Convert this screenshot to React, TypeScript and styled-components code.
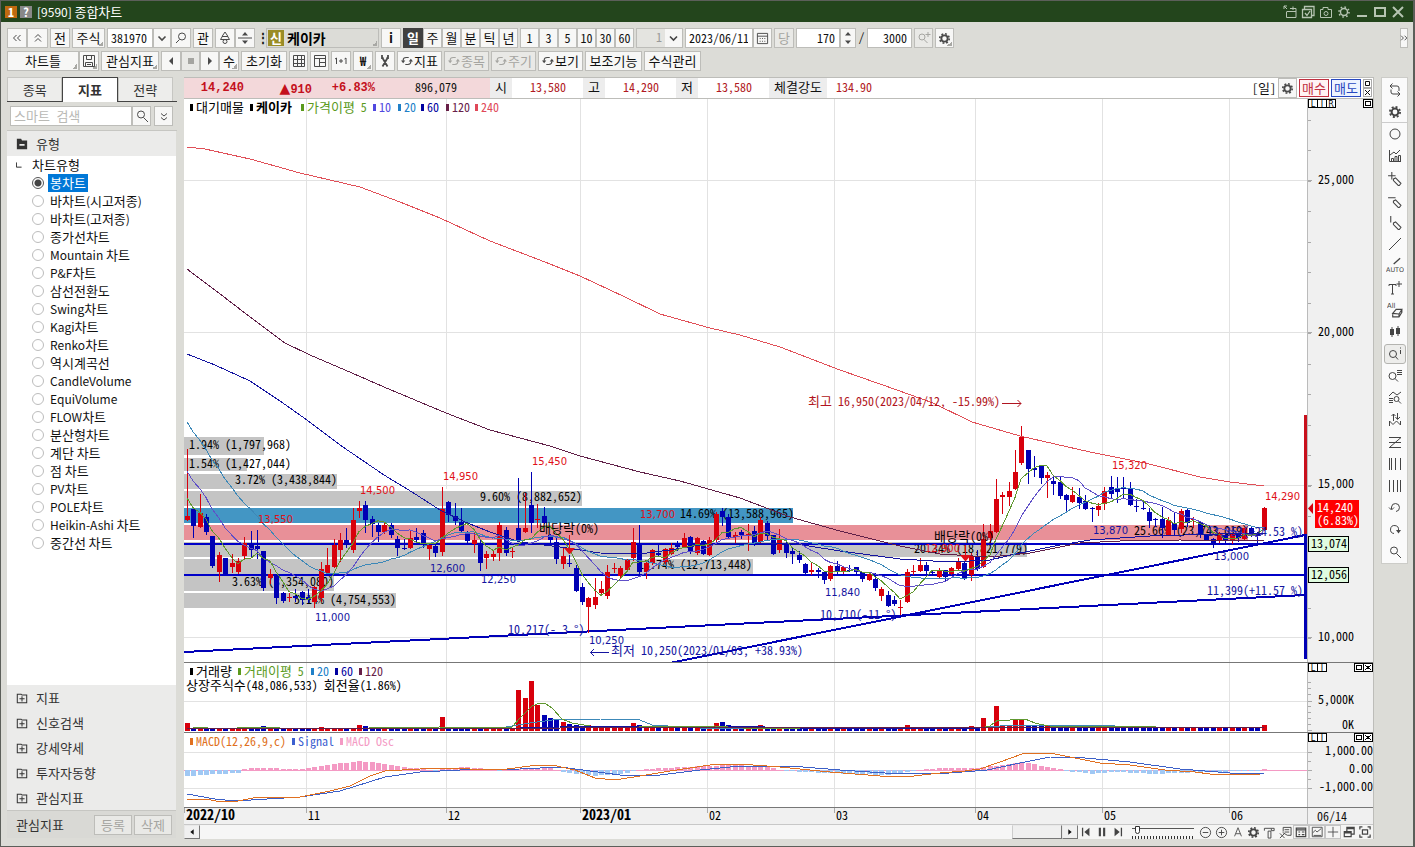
import React from 'react';
import styled, { createGlobalStyle, css } from 'styled-components';

const MONO = '"Noto Sans Mono CJK KR", "Noto Sans CJK KR", "Liberation Mono", monospace';
const SANS = '"Noto Sans CJK KR", "Noto Sans", sans-serif';

const Global = createGlobalStyle`
  * { box-sizing: border-box; }
  body { margin: 0; background: #dcdcd7; }
  button, input, select { font: inherit; color: inherit; margin: 0; }
`;

/* ---------- window frame ---------- */

const Window = styled.div`
  min-height: 100vh;
  display: flex;
  flex-direction: column;
  background: #dcdcd7;
  border: solid #5c5f5a;
  border-width: 1px 2px 1px 1px;
  font: 12px/16px ${MONO};
  color: #111;
`;
const TitleBar = styled.header`
  height: 21px;
  background: #23451c;
  color: #fff;
  display: flex;
  align-items: center;
  gap: 3px;
  padding: 0 8px 0 4px;
`;
const Badge = styled.span<{ $bg: string }>`
  width: 12px;
  height: 12px;
  background: ${p => p.$bg};
  font-weight: 700;
  line-height: 12px;
  text-align: center;
`;
const Title = styled.h1`
  font: 400 12px/16px ${SANS};
  margin: 0 auto 0 2px;
`;
const TitleButton = styled.button`
  width: 15px;
  height: 16px;
  padding: 0;
  border: 0;
  background: none;
  color: #b6c4b2;
  display: grid;
  place-items: center;
`;

/* ---------- toolbars ---------- */

const Toolbars = styled.div`
  padding: 6px 5px 6px 6px;
  display: flex;
  flex-direction: column;
  gap: 3px;
`;
const ToolRow = styled.div`
  display: flex;
  gap: 2px;
  height: 20px;
`;
const Joined = styled.div`
  display: flex;
  & > * + * { border-left-width: 0; }
`;
const control = css<{ $w: number }>`
  width: ${p => p.$w}px;
  height: 20px;
  flex: none;
  border: 1px solid #bdbdb9;
  border-radius: 0;
  background: #f7f7f6;
`;
const ToolButton = styled.button<{ $w: number; $on?: boolean; $corner?: boolean }>`
  ${control}
  padding: 0;
  display: flex;
  align-items: center;
  justify-content: center;
  gap: 1px;
  font-size: 13px;
  line-height: 16px;
  white-space: nowrap;
  & > svg { color: #4a4a4a; flex: none; }
  ${p => p.$on && 'background: #404040; border-color: #404040; color: #fff; font-weight: 700;'}
  ${p => p.$corner && 'background: linear-gradient(135deg, transparent 50%, #a8a8a4 50%) right 1px bottom 1px / 5px 5px no-repeat #f7f7f6;'}
  &:disabled { color: #a5a5a1; background: #e9e9e6; }
  &:disabled > svg { color: #a5a5a1; }
`;
const NumberButton = styled(ToolButton)`
  font-size: 12px;
`;
const Field = styled.input<{ $w: number; $right?: boolean }>`
  ${control}
  background: #fff;
  padding: 0 4px 2px 3px;
  text-align: ${p => (p.$right ? 'right' : 'left')};
`;
const UnitSelect = styled.select<{ $w: number }>`
  ${control}
  appearance: none;
  padding: 0 20px 2px 0;
  text-align: right;
  text-align-last: right;
  color: #999;
  background: #e4e4e0;
`;
const SelectWrap = styled.label`
  position: relative;
  display: flex;
  & > svg { position: absolute; right: 1px; top: 1px; background: #f7f7f6; pointer-events: none; }
`;
const Dots = styled.span`
  width: 7px;
  text-align: center;
  line-height: 18px;
`;
const NameBox = styled.button`
  ${control}
  background: linear-gradient(135deg, transparent 50%, #a8a8a4 50%) right 1px bottom 1px / 5px 5px no-repeat #dcdcd7;
  display: flex;
  align-items: center;
  gap: 3px;
  padding: 0 1px;
  font-weight: 700;
  font-size: 14px;
  line-height: 16px;
  color: #000;
`;
const MarketTag = styled.span`
  width: 16px;
  height: 16px;
  line-height: 16px;
  background: #9a8c26;
  color: #fff;
  font-size: 13px;
`;
const Push = styled.div`
  margin-left: auto;
`;

/* ---------- body ---------- */

const Body = styled.div`
  flex: 1;
  display: grid;
  grid-template-columns: 170px minmax(0, 1fr) 27px;
  gap: 7px;
  padding: 0 5px 7px 6px;
`;
const Side = styled.aside`
  display: flex;
  flex-direction: column;
`;
const Tabs = styled.div`
  display: flex;
  border-bottom: 1px solid #444;
  padding-right: 4px;
`;
const Tab = styled.button<{ $on?: boolean }>`
  flex: 1;
  height: 24px;
  padding: 0;
  border: 1px solid #c6c6c2;
  border-bottom: 0;
  background: #ededeb;
  color: #333;
  font-size: 13px;
  line-height: 16px;
  ${p => p.$on && 'border-color: #444; background: #fff; font-weight: 700; margin-bottom: -1px; height: 25px;'}
`;
const Search = styled.div`
  display: flex;
  padding: 4px 3px;
  border-bottom: 1px solid #c6c6c2;
  input { font-size: 13px; }
  input::placeholder { color: #b9b9b5; }
`;
const SearchMore = styled.div`
  margin-left: 3px;
`;
const GroupHead = styled.button`
  width: 169px;
  height: 25px;
  flex: none;
  border: 0;
  padding: 0 0 0 9px;
  display: flex;
  align-items: center;
  gap: 8px;
  background: #ebebea;
  color: #333;
  font-size: 13px;
  line-height: 16px;
  text-align: left;
`;
const Tree = styled.fieldset`
  flex: 1;
  width: 169px;
  margin: 0;
  border: 0;
  padding: 0 0 0 9px;
  background: #fff;
  font: 12px/18px ${SANS};
  color: #111;
`;
const TreeTitle = styled.legend`
  float: left;
  width: 100%;
  height: 18px;
  padding: 0;
  display: flex;
  gap: 10px;
  align-items: center;
`;
const TreeItem = styled.label`
  clear: both;
  height: 18px;
  padding-left: 16px;
  display: flex;
  align-items: center;
  gap: 4px;
`;
const Radio = styled.input`
  appearance: none;
  width: 12px;
  height: 12px;
  border: 1px solid #bcbcbc;
  border-radius: 50%;
  background: #fff;
  &:checked { border-color: #555; background: radial-gradient(#444 0 3px, #fff 4px); }
`;
const TreeLabel = styled.span<{ $on?: boolean }>`
  height: 18px;
  padding: 0 2px;
  ${p => p.$on && 'background: #0078d7; color: #fff;'}
`;
const Hangul = styled.span`
  font-size: 13px;
  line-height: 16px;
`;
const SideFoot = styled.div`
  width: 169px;
  height: 28px;
  margin-bottom: 1px;
  display: flex;
  align-items: center;
  gap: 2px;
  padding: 0 4px 0 9px;
  border-top: 1px solid #c6c6c2;
  background: #d9d9d5;
  color: #333;
  font-size: 13px;
  & > span { margin-right: auto; }
`;

/* ---------- quote strip ---------- */

const Main = styled.main`
  border: solid #bdbdb9;
  border-width: 1px 1px 0 0;
  background: #fff;
  align-self: start;
`;
const Quote = styled.div`
  display: flex;
  height: 21px;
  line-height: 18px;
  border-bottom: 1px solid #bdbdb9;
`;
const PriceBox = styled.div`
  display: grid;
  grid-template-columns: 60px 68px 63px 82px;
  width: 306px;
  background: #f3d8da;
  text-align: right;
`;
const Strong = styled.b`
  font: 700 12px/20px "Liberation Mono", monospace;
  color: #c4101c;
`;
const Rise = styled.span`
  font: 700 14px/20px "DejaVu Sans", sans-serif;
`;
const QuoteName = styled.span<{ $w: number }>`
  width: ${p => p.$w}px;
  background: #ededed;
  text-align: center;
  font-size: 13px;
`;
const QuoteValue = styled.span<{ $w: number }>`
  width: ${p => p.$w}px;
  padding-right: 17px;
  text-align: right;
  color: #b01822;
`;
const QuoteTools = styled.div`
  margin-left: auto;
  display: flex;
  align-items: center;
  gap: 2px;
  padding-right: 1px;
`;
const OrderButton = styled.button<{ $c: string; $bg: string }>`
  width: 30px;
  height: 18px;
  padding: 0;
  font-size: 13px;
  line-height: 14px;
  border: 1px solid ${p => p.$c};
  background: ${p => p.$bg};
  color: ${p => p.$c};
`;
const MiniStack = styled.div`
  display: grid;
  grid-template-rows: 9px 9px;
`;
const MiniButton = styled.button`
  width: 9px;
  height: 9px;
  padding: 0;
  border: 1px solid #aaa;
  background: #fff;
  display: grid;
  place-items: center;
`;

/* ---------- chart panes ---------- */

const Pane = styled.section`
  display: grid;
  grid-template-columns: minmax(0, 1fr) 66px;
  border-bottom: 1px solid #777;
`;
const Drawing = styled.svg<{ $open?: boolean }>`
  display: block;
  width: 100%;
  height: auto;
  ${p => p.$open && 'overflow: visible;'}
`;
const AxisCol = styled.div`
  background: #f0f0f0;
  border-left: 1px solid #bbb;
`;
const DateRow = styled(Pane)`
  background: #f0f0f0;
  border-bottom-color: #c8c8c8;
`;
const LastDate = styled.time`
  border-left: 1px solid #bbb;
  padding-left: 9px;
  line-height: 16px;
`;
const ScrollRow = styled.div`
  display: flex;
  height: 14px;
  background: #f5f5f4;
`;
const ScrollTrack = styled.div`
  flex: 1;
  display: flex;
  justify-content: space-between;
  background: #f6f6f6;
`;
const ScrollButton = styled.button`
  width: 16px;
  height: 14px;
  padding: 0;
  border: 1px solid;
  border-color: #e8e8e8 #777 #777 #e8e8e8;
  background: #f0f0f0;
  display: grid;
  place-items: center;
`;
const ScrollThumb = styled.div`
  width: 50px;
  margin-left: auto;
  border: 1px solid;
  border-color: #e8e8e8 #777 #777 #ccc;
  background: #efefef;
`;
const PlayTools = styled.div`
  display: flex;
  width: 295px;
  align-items: center;
`;
const PlainButton = styled.button<{ $on?: boolean }>`
  width: 16px;
  height: 14px;
  padding: 0;
  border: ${p => (p.$on ? '1px solid #c4c4c4' : '0')};
  background: none;
  color: #444;
  display: grid;
  place-items: center;
`;
const SpeedLabel = styled.label`
  width: 62px;
  height: 14px;
  margin: 0 4px 0 6px;
  display: block;
  background: repeating-linear-gradient(90deg, #333 0 1px, transparent 1px 3px) 0 100% / 62px 3px no-repeat;
`;
const Speed = styled.input`
  appearance: none;
  display: block;
  width: 62px;
  height: 9px;
  background: linear-gradient(#555, #555) 0 3px / 62px 1px no-repeat;
  &::-webkit-slider-thumb {
    appearance: none;
    width: 5px;
    height: 8px;
    border: 1px solid #333;
    border-radius: 0 0 3px 3px;
    background: #fff;
  }
`;

/* ---------- right tool strip ---------- */

const Strip = styled.nav`
  align-self: start;
  padding: 1px 0 0;
  background: #fafafa;
  border: 1px solid #ccccc8;
  display: flex;
  flex-direction: column;
  align-items: center;
`;
const StripButton = styled.button<{ $on?: boolean; $line?: boolean }>`
  width: 100%;
  height: 22px;
  padding: 0;
  border: 0;
  border-bottom: ${p => (p.$line ? '1px solid #ccc' : '0')};
  background: none;
  color: #444;
  display: grid;
  place-items: center;
  ${p => p.$on && 'width: 22px; height: 20px; margin: 1px; border: 1px solid #b4b4b0; border-radius: 3px; background: #ededeb;'}
`;

/* ---------- icons ---------- */

type IconProps = { d?: string; fill?: string; s?: number; w?: number; children?: React.ReactNode };
const Icon = ({ d, fill, s = 14, w = 1, children }: IconProps) => (
  <svg width={s} height={s} viewBox="0 0 14 14" fill="none" stroke="currentColor" strokeWidth={w} aria-hidden="true">
    {d && <path d={d} />}
    {fill && <path d={fill} fill="currentColor" stroke="none" />}
    {children}
  </svg>
);
const Gear = ({ s = 14 }: { s?: number }) => (
  <Icon s={s}>
    <circle cx="7" cy="7" r="3.4" strokeWidth="2" />
    <circle cx="7" cy="7" r="5.1" strokeWidth="1.8" strokeDasharray="2 2" />
  </Icon>
);
const Sun = () => (
  <Icon>
    <circle cx="7" cy="7" r="3.5" strokeWidth="1.4" />
    <circle cx="7" cy="7" r="5" strokeWidth="1.6" strokeDasharray="1.6 2.3" />
  </Icon>
);
const MAG = 'M2.5 5.5a3.5 3.5 0 1 0 7 0a3.5 3.5 0 1 0 -7 0M8.5 8.5L13 13';
const Cycle = () => (
  <Icon s={12} w={1.2} d="M2.500 7V6Q2.500 3 6 3H9M11.500 7V8Q11.500 11 8 11H5" fill="M0 6.500H5L2.500 9.500ZM9 7.500H14L11.500 4.500Z" />
);
const Down = () => <Icon w={1.6} d="M3.5 5.5L7 9L10.5 5.5" />;
const Spin = ({ w }: { w: number }) => (
  <ToolButton $w={w} aria-label="증감"><Icon fill="M7 1L10 4.500H4ZM7 13L10 9.500H4Z" d={w > 16 ? 'M0 7H14' : undefined} /></ToolButton>
);

const runs = (t: string) => t.split(/([가-힣]+)/).filter(Boolean);
const isKorean = (t: string) => /[가-힣]/.test(t);
const Mixed = ({ t }: { t: string }) => (
  <>{runs(t).map((r, i) => (isKorean(r) ? <Hangul key={i}>{r}</Hangul> : r))}</>
);

/* ---------- chart data: [up, high, bodyTop, bodyBottom, low] in chart rows ---------- */

type Candle = [number, number, number, number, number];
const CANDLES: Candle[] = [
  [1,449,516,520,520],[0,507,509,526,537],[1,494,513,527,527],[0,514,517,532,534],[0,536,536,566,567],
  [1,552,555,572,581],[0,558,558,574,574],[1,554,563,567,572],[1,558,561,572,573],[1,537,543,556,559],
  [0,531,544,550,556],[0,530,546,549,558],[0,551,551,588,590],[1,569,574,578,583],[0,574,574,598,603],
  [0,592,593,601,602],[1,593,597,598,601],[0,589,596,598,601],[0,591,592,600,604],[0,589,597,600,602],
  [1,586,587,602,607],[1,562,569,598,601],[1,548,565,573,573],[1,539,545,567,567],[1,533,540,550,561],
  [0,528,540,545,547],[1,508,520,550,552],[1,501,508,511,517],[0,501,505,520,532],[0,516,519,524,536],
  [0,523,525,532,541],[1,523,525,532,533],[0,523,525,535,537],[0,536,539,548,555],[0,539,548,549,549],
  [1,530,538,548,548],[0,528,537,540,541],[0,530,533,544,547],[1,545,545,549,559],[0,543,546,553,556],
  [1,487,509,552,555],[0,501,502,515,521],[0,503,516,521,524],[0,508,522,531,531],[0,531,532,541,543],
  [1,532,540,544,552],[0,539,543,563,570],[1,551,554,558,568],[1,551,554,557,560],[1,522,525,553,560],
  [0,527,530,553,555],[1,547,551,552,557],[0,478,528,541,541],[1,493,528,532,532],[0,472,505,523,532],
  [1,504,519,520,527],[0,507,516,523,523],[0,534,535,540,543],[0,537,542,559,563],[1,547,556,564,568],
  [0,555,563,564,566],[0,565,568,591,591],[0,583,587,602,604],[1,597,598,607,632],[1,578,597,605,608],
  [1,581,589,593,595],[1,565,572,596,598],[1,563,568,569,572],[1,566,568,576,578],[1,559,560,570,571],
  [1,528,542,558,560],[0,525,545,572,576],[1,560,563,572,578],[1,549,550,563,564],[0,545,553,555,556],
  [1,548,549,562,563],[1,543,548,554,554],[0,541,545,547,550],[1,533,538,547,547],[0,536,537,551,553],
  [1,537,538,553,554],[0,540,541,554,554],[1,537,540,555,555],[1,512,514,540,542],[0,508,511,517,525],
  [0,514,517,537,538],[1,532,535,537,543],[0,530,532,535,538],[1,524,534,535,550],[0,526,531,543,545],
  [1,517,520,542,542],[0,521,523,536,540],[0,535,535,554,554],[1,529,540,550,552],[0,542,543,553,557],
  [0,547,551,554,563],[0,551,555,560,562],[0,563,564,573,573],[1,562,570,572,574],[0,568,570,572,577],
  [0,572,572,580,583],[1,565,566,579,580],[0,561,566,571,574],[1,566,567,572,573],[0,565,570,571,571],
  [0,567,567,572,573],[0,572,572,579,581],[1,573,574,580,580],[0,573,579,588,590],[1,587,589,596,600],
  [0,591,595,606,606],[0,596,600,604,605],[1,600,607,608,614],[1,569,572,602,602],[1,565,571,572,574],
  [1,558,565,571,571],[0,562,565,571,573],[0,570,572,573,575],[1,568,570,577,577],[0,570,570,577,580],
  [1,567,568,574,574],[1,558,562,569,569],[0,562,563,579,579],[1,553,556,575,580],[0,550,557,569,570],
  [1,524,539,567,567],[1,524,531,538,542],[1,479,499,532,532],[1,492,495,497,513],[1,482,491,497,505],
  [1,450,472,489,489],[1,426,437,463,464],[0,450,450,469,483],[0,456,468,470,476],[0,465,466,478,483],
  [1,472,475,478,497],[0,476,481,484,494],[0,477,482,496,498],[0,494,495,500,511],[1,487,495,502,502],
  [0,488,497,503,508],[0,495,501,509,509],[0,507,508,509,521],[1,503,506,510,515],[1,487,491,504,509],
  [0,476,487,494,497],[0,477,488,492,502],[0,477,488,489,497],[0,482,488,505,505],[0,499,506,507,511],
  [0,500,508,509,509],[0,508,512,521,527],[0,518,519,520,526],[0,507,519,528,537],[1,517,520,535,535],
  [0,513,523,530,535],[1,509,511,529,532],[0,508,510,523,526],[1,517,519,520,527],[0,521,522,535,537],
  [0,534,535,540,540],[0,538,539,545,547],[1,532,533,541,542],[0,534,535,541,543],[1,533,534,541,543],
  [0,532,533,538,541],[1,528,528,539,539],[0,527,528,535,536],[0,532,533,535,543],[1,507,508,530,530],
];
/* closes before the visible range, newest last, feed the moving averages */
const HISTORY = [331,340,350,359,368,378,387,396,406,415,426,435,444,453,462,478,488,500,508];
const RED = '#d8000c';
const BLUE = '#0000b4';
const cx = (i: number) => Math.round(187 + i * 6.37);
const closes = [...HISTORY, ...CANDLES.map(c => (c[0] ? c[2] : c[3]))];
const average = (n: number) =>
  CANDLES.map((_, i) => {
    const end = i + HISTORY.length + 1;
    const part = closes.slice(end - n, end);
    return `${cx(i)},${(part.reduce((a, b) => a + b, 0) / n).toFixed(1)}`;
  }).join(' ');

const MA60 = '187,354 215,365 250,381 280,401 307,420 340,445 384,475 412,492 440,510 465,522 490,532 520,542 560,547 600,553 640,554 670,550 700,545 740,543 790,543 840,551 900,559 950,562 990,560 1020,553 1060,545 1090,540 1150,536 1220,534 1264,533';
const MA120 = '187,269 215,290 250,317 285,343 310,355 352,373 384,387 446,413 490,430 550,446 580,456 640,472 680,481 740,498 790,517 840,531 900,546 940,554 990,557 1030,553 1080,543 1120,541 1180,540 1264,541';
const MA240 = '187,147 205,149 250,159 300,173 330,180 360,187 400,202 440,218 490,241 545,262 580,276 625,297 660,314 710,328 740,335 780,347 840,370 897,390 933,403 972,422 1020,436 1090,452 1145,463 1200,477 1230,482 1264,486';

const MONTHS: [number, string, boolean?][] = [
  [184, '2022/10', true], [306, '11'], [446, '12'], [580, '2023/01', true], [707, '02'],
  [834, '03'], [975, '04'], [1102, '05'], [1229, '06'],
];
const PROFILE: [number, number, number, string][] = [
  [437, 18, 80, '#c4c4c4'], [458, 13, 63, '#c4c4c4'], [474, 15, 153, '#c4c4c4'], [491, 15, 398, '#c4c4c4'],
  [508, 15, 609, '#4396c4'], [525, 15, 1064, '#e89098'], [542, 15, 843, '#c4c4c4'], [559, 15, 569, '#c4c4c4'],
  [576, 15, 150, '#c4c4c4'], [593, 15, 212, '#c4c4c4'],
];
const PROFILE_TEXT: [number, number, string][] = [
  [189, 445, '1.94% (1,797,968)'], [189, 464, '1.54% (1,427,044)'], [235, 480, '3.72% (3,438,844)'],
  [480, 497, '9.60% (8,882,652)'], [680, 514, '14.69% (13,588,965)'], [1134, 531, '25.66% (23,743,019)'],
  [914, 549, '20.34% (18,821,779)'], [638, 565, '13.74% (12,713,448)'], [232, 582, '3.63% (3,354,080)'],
  [294, 600, '5.14% (4,754,553)'],
];
const PEAKS: [number, number, string][] = [
  [258, 519, '13,550'], [360, 490, '14,500'], [443, 476, '14,950'], [532, 461, '15,450'], [640, 514, '13,700'],
  [925, 548, '12,900'], [1112, 465, '15,320'], [1265, 496, '14,290'],
];
const TROUGHS: [number, number, string][] = [
  [315, 617, '11,000'], [430, 568, '12,600'], [481, 579, '12,250'], [589, 640, '10,250'], [825, 592, '11,840'],
  [1093, 530, '13,870'], [1214, 556, '13,000'],
];

const VOLUME: Record<number, number> = {
  0: 8, 2: 4, 12: 5, 21: 4, 27: 6, 28: 5, 40: 14, 52: 41, 53: 33, 54: 50, 55: 26, 56: 16, 57: 13, 58: 11, 59: 9,
  60: 7, 61: 6, 62: 5, 63: 6, 70: 8, 71: 6, 83: 8, 84: 9, 85: 6, 90: 6, 108: 4, 113: 6, 123: 5, 125: 13, 126: 5,
  127: 25, 128: 6, 129: 6, 130: 11, 131: 12, 132: 5, 133: 5, 134: 5, 135: 6, 169: 6,
};
const VOL_MA5 = '187,729 200,727 215,729 260,727 300,729 440,727 470,728 512,727 520,718 532,706 540,703 546,704 552,708 562,719 572,723 590,726 640,727 715,726 740,728 975,729 990,726 998,720 1010,720 1025,719 1035,723 1048,726 1264,728';
const VOL_MA20 = '187,729 300,728 500,728 530,723 560,719 600,719 640,720 652,725 700,728 980,728 1010,725 1105,725 1125,727 1264,728';

const interpolate = (pts: [number, number][], i: number) => {
  const k = pts.findIndex(p => p[0] >= i);
  if (k <= 0) return pts[0][1];
  const [a, b] = [pts[k - 1], pts[k]];
  return a[1] + ((b[1] - a[1]) * (i - a[0])) / (b[0] - a[0]);
};
const OSC: [number, number][] = [
  [0, -6], [5, -4], [8, -3], [9, 1], [11, 2], [18, 1], [21, 4], [27, 9], [31, 6], [34, 3], [37, 1], [39, -1], [41, 2],
  [44, 3], [47, 1], [49, -1], [53, 2], [57, 2], [59, -2], [64, -6], [68, -4], [72, 1], [78, 3], [86, 5], [91, 3],
  [94, -1], [100, -3], [110, -5], [114, -1], [118, 2], [124, 2], [128, 5], [131, 8], [135, 3], [137, 1], [138, -1],
  [142, -4], [146, -2], [152, -4], [160, -2], [168, -1], [169, 1],
];
const MACD = '187,799 205,799 222,802 238,801 258,797 300,797 330,791 350,786 370,776 385,771 420,769 446,768 470,769 500,770 530,766 552,765 575,770 595,778 615,780 640,776 670,771 710,765 740,764 780,767 830,772 880,776 905,777 940,773 965,771 980,769 1000,762 1022,754 1050,753 1085,760 1100,763 1130,765 1165,770 1195,772 1210,774 1260,774';
const SIGNAL = '187,794 215,799 235,801 300,797 340,791 385,777 420,772 460,770 520,769 560,767 590,771 620,775 660,775 700,770 740,766 790,766 840,770 900,774 950,773 987,770 1020,763 1050,757 1085,758 1130,762 1180,769 1230,773 1264,773';

/* ---------- chart drawing parts ---------- */

const TextLine = styled.text<{ $small?: boolean; $bold?: boolean }>`
  font: ${p => (p.$bold ? 700 : 400)} ${p => (p.$small ? '10px "DejaVu Sans", sans-serif' : `12px ${MONO}`)};
  white-space: pre;
`;
const DateText = styled.text<{ $bold?: boolean }>`
  font: ${p => (p.$bold ? '700 14px' : '400 12px')} ${MONO};
`;
const KeyText = styled.text`
  font: 8px "DejaVu Sans", sans-serif;
`;
const HangulRun = styled.tspan`
  font-size: 13px;
`;
type LabelProps = { x: number; y: number; t: string; fill?: string; small?: boolean; bold?: boolean; end?: boolean };
const Label = ({ x, y, t, fill, small, bold, end }: LabelProps) => (
  <TextLine x={x} y={y} fill={fill} $small={small} $bold={bold} textAnchor={end ? 'end' : undefined}>
    {runs(t).map((r, i) => (isKorean(r) ? <HangulRun key={i}>{r}</HangulRun> : r))}
  </TextLine>
);
const GridLines = ({ y1, y2, rows }: { y1: number; y2: number; rows: number[] }) => (
  <g fill="#e2e2e2" shapeRendering="crispEdges">
    {MONTHS.slice(1).map(m => <rect key={m[0]} x={m[0]} y={y1} width="1" height={y2 - y1} />)}
    {rows.map(y => <rect key={y} x="184" y={y} width="1123" height="1" />)}
  </g>
);
type LegendItem = [number, string, string, boolean?];
const Legend = ({ y, items }: { y: number; items: LegendItem[] }) => (
  <g>
    {items.map(([x, text, color, bold]) => (
      <g key={x} fill={color}>
        <rect x={x} y={y - 4} width="3" height="7" />
        <Label x={x + 6} y={y + 4} bold={bold} t={text} />
      </g>
    ))}
  </g>
);
const Line = ({ p, c }: { p: string; c: string }) => (
  <polyline points={p} fill="none" stroke={c} strokeWidth="1" shapeRendering="crispEdges" />
);

const PricePlot = () => (
  <Drawing viewBox="184 99 1123 563" role="img" aria-label="케이카 일봉 차트">
    <GridLines y1={99} y2={662} rows={[180, 332, 485, 637]} />
    <g shapeRendering="crispEdges">
      {PROFILE.map(([y, h, w, c]) => (
        <g key={y}>
          <rect x="184" y={y - 2} width={w} height={h + 4} fill="#fff" />
          <rect x="184" y={y} width={w} height={h} fill={c} />
        </g>
      ))}
    </g>
    {PROFILE_TEXT.map(([x, y, t]) => <Label key={t} x={x} y={y + 4} t={t} fill="#000" />)}
    <g stroke="#0000b8" strokeWidth="2" fill="none">
      <path d="M184 544H1305M184 575H1305" shapeRendering="crispEdges" stroke="#0000c8" />
      <path d="M184 652L1305 595M670 663L1305 535" shapeRendering="crispEdges" />
    </g>
    <g shapeRendering="crispEdges">
      {CANDLES.map(([up, hi, top, bot, lo], i) => (
        <g key={i} fill={up ? RED : BLUE}>
          <rect x={cx(i)} y={hi} width="1" height={lo - hi + 1} />
          <rect x={cx(i) - 2} y={top} width="5" height={Math.max(1, bot - top)} />
        </g>
      ))}
    </g>
    <Line p={MA240} c="#e05058" />
    <Line p={MA120} c="#602048" />
    <Line p={MA60} c="#1414a0" />
    <Line p={average(20)} c="#3c88b8" />
    <Line p={average(10)} c="#6050c8" />
    <Line p={average(5)} c="#609830" />
    <g fill="#e01018">
      <path d="M569 535h1v13h5l-5 6h-1l-5-6h5ZM965 545h1v10h5l-5 6h-1l-5-6h5Z" />
      {PEAKS.map(([x, y, t]) => <Label key={t} small x={x} y={y + 4} t={t} />)}
    </g>
    <g fill="#1414a0">
      {TROUGHS.map(([x, y, t]) => <Label key={t} small x={x} y={y + 4} t={t} />)}
      <Label x={508} y={634} t="10,217(- 3 °)" />
      <Label x={820} y={619} t="10,710(-11 °)" />
      <Label x={1207} y={536} t="13,352(+24.53 %)" />
      <Label x={1207} y={595} t="11,399(+11.57 %)" />
      <Label x={611} y={655} t="최저 10,250(2023/01/03, +38.93%)" />
    </g>
    <path d="M609 652.5H590.5M594 649L590.5 652.5L594 656" stroke="#1414a0" fill="none" />
    <Label x={539} y={533} t="배당락(0%)" fill="#000" />
    <Label x={934} y={541} t="배당락(0%)" fill="#000" />
    <Label x={808} y={406} t="최고 16,950(2023/04/12, -15.99%)" fill="#b01420" />
    <path d="M1002 403.5H1021M1017.500 400L1021 403.5L1017.500 407" stroke="#b01420" fill="none" />
    <rect x="1304" y="415" width="3" height="119" fill="#c8101c" />
    <rect x="1304" y="534" width="3" height="125" fill={BLUE} />
    <Legend y={108} items={[
      [190, '대기매물', '#000'], [250, '케이카', '#000', true], [301, '가격이평 5', '#5a9a1c'], [373, '10', '#5048e0'],
      [398, '20', '#2080c8'], [421, '60', '#0000a0'], [446, '120', '#682048'], [475, '240', '#e04858'],
    ]} />
  </Drawing>
);
const VolumePlot = () => (
  <Drawing viewBox="184 663 1123 69" role="img" aria-label="거래량">
    <GridLines y1={663} y2={732} rows={[701]} />
    <g shapeRendering="crispEdges">
      {CANDLES.map(([up], i) => {
        const h = VOLUME[i] ?? 3;
        return <rect key={i} x={cx(i) - 2} y={731 - h} width="5" height={h} fill={up || h > 30 ? RED : BLUE} />;
      })}
    </g>
    <Line p={VOL_MA20} c="#3c88b8" />
    <Line p={VOL_MA5} c="#609830" />
    <Line p="187,728 520,728 560,727 640,726 730,726 800,728 980,728 1264,727" c="#1414a0" />
    <Line p="187,729 560,728 1264,727" c="#602048" />
    <Legend y={672} items={[
      [190, '거래량', '#000'], [238, '거래이평 5', '#5a9a1c'], [311, '20', '#2080c8'], [335, '60', '#0000a0'], [359, '120', '#682048'],
    ]} />
    <Label x={186} y={690} t="상장주식수(48,086,533) 회전율(1.86%)" fill="#000" />
  </Drawing>
);
const MacdPlot = () => (
  <Drawing viewBox="184 733 1123 74" role="img" aria-label="MACD">
    <GridLines y1={733} y2={807} rows={[752, 788]} />
    <g shapeRendering="crispEdges">
      <rect x="184" y="770" width="1123" height="1" fill="#f49ac4" />
      {CANDLES.map((_, i) => {
        const v = Math.round(interpolate(OSC, i));
        return <rect key={i} x={cx(i) - 2} y={v > 0 ? 770 - v : 770} width="5" height={Math.abs(v)} fill={v > 0 ? '#f49ac4' : '#a0c8f4'} />;
      })}
    </g>
    <Line p={SIGNAL} c="#3c60c8" />
    <Line p={MACD} c="#e07020" />
    <Legend y={742} items={[[190, 'MACD(12,26,9,c)', '#e07020'], [292, 'Signal', '#3c60d0'], [340, 'MACD Osc', '#f49ac4']]} />
  </Drawing>
);

const Keys = ({ y, left, right }: { y: number; left: string; right: 'max' | 'both' }) => (
  <g stroke="#000" fill="none" shapeRendering="crispEdges">
    {left.split('').map((c, i) => (
      <g key={c}>
        <rect x={1308.5 + i * 9} y={y + 0.5} width="9" height="8" fill="#fff" />
        <KeyText x={1313 + i * 9} y={y + 8} textAnchor="middle" stroke="none" fill="#000">{c}</KeyText>
      </g>
    ))}
    {right === 'both' && <path d={`M1354.500 ${y + 0.5}h9v8h-9zM1356.500 ${y + 2.5}h5v4h-5z`} fill="#fff" />}
    <rect x="1363.5" y={y + 0.5} width="9" height="8" fill="#fff" />
    {right === 'both'
      ? <path d={`M1365 ${y + 2}l6 5m0-5l-6 5`} />
      : <rect x="1365.5" y={y + 2.5} width="5" height="4" />}
  </g>
);
const Scale = ({ x, y, t }: { x?: number; y: number; t: string }) => (
  <Label x={x ?? 1373} y={y + 4} end={!x} fill="#000" t={t} />
);
const Ticks = ({ minor, major }: { minor: number[]; major: number[] }) => (
  <g fill="#aaa">
    {minor.map(y => <rect key={y} x="1308" y={y} width="3" height="1" />)}
    {major.map(y => <rect key={y} x="1308" y={y} width="4" height="1" />)}
  </g>
);
const PriceAxis = () => (
  <AxisCol>
    <Drawing $open viewBox="1308 99 65 563">
      <Ticks minor={Array.from({ length: 18 }, (_, i) => Math.round(119.5 + i * 30.5))} major={[180, 332, 485, 637]} />
      <Keys y={99} left="LIR" right="max" />
      <Scale x={1318} y={180} t="25,000" />
      <Scale x={1318} y={332} t="20,000" />
      <Scale x={1318} y={484} t="15,000" />
      <Scale x={1318} y={637} t="10,000" />
      <rect x="1315" y="500" width="44" height="28" fill="#ff0000" />
      <path d="M1313 503v11l-5-5.500z" fill="#d80010" />
      <Label x={1317} y={512} t="14,240" fill="#fff" />
      <Label x={1317} y={525} t="(6.83%)" fill="#fff" />
      <g fill="#e0fce0" stroke="#000">
        <rect x="1308.5" y="536.5" width="40" height="15" />
        <rect x="1308.5" y="567.5" width="40" height="15" />
      </g>
      <Scale x={1311} y={544} t="13,074" />
      <Scale x={1311} y={575} t="12,056" />
    </Drawing>
  </AxisCol>
);
const VolumeAxis = () => (
  <AxisCol>
    <Drawing $open viewBox="1308 663 65 69">
      <Ticks minor={[682, 688, 694, 706, 712, 718, 724]} major={[701, 730]} />
      <Keys y={663} left="LI" right="both" />
      <Scale x={1318} y={700} t="5,000K" />
      <Scale x={1342} y={725} t="0K" />
    </Drawing>
  </AxisCol>
);
const MacdAxis = () => (
  <AxisCol>
    <Drawing $open viewBox="1308 733 65 74">
      <Ticks minor={[761, 779]} major={[752, 770, 788]} />
      <Keys y={733} left="LI" right="both" />
      <Scale y={751} t="1,000.00" />
      <Scale y={769} t="0.00" />
      <Scale y={787} t="-1,000.00" />
    </Drawing>
  </AxisCol>
);

/* ---------- lists ---------- */

const TYPES = ['봉차트', '바차트(시고저종)', '바차트(고저종)', '종가선차트', 'Mountain 차트', 'P&F차트', '삼선전환도', 'Swing차트',
  'Kagi차트', 'Renko차트', '역시계곡선', 'CandleVolume', 'EquiVolume', 'FLOW차트', '분산형차트', '계단 차트', '점 차트', 'PV차트',
  'POLE차트', 'Heikin-Ashi 차트', '중간선 차트'];
const GROUPS = ['지표', '신호검색', '강세약세', '투자자동향', '관심지표'];
const Pencil = ({ d }: { d: string }) => <Icon s={15} d={`${d}M6 7.500L8 6.500L13 11.500L11.500 13.500H10.500L6 9Z`} />;
const IconText = styled.text`
  font-family: "DejaVu Sans", sans-serif;
  fill: currentColor;
  stroke: none;
`;
const STRIP: [string, React.ReactNode][] = [
  ['새로고침', <Icon d="M4.500 0.500L2 3L4.500 5.500M2 3H9Q11 3 11 5V8M9.500 8.500L12 11L9.500 13.500M12 11H5Q3 11 3 9V6.500" />],
  ['설정', <Gear />],
  ['원', <Icon><circle cx="7" cy="7" r="5" /></Icon>],
  ['지표 추가', <Icon d="M1.500 1V12.500H13M3.500 12V9.500H5.500V12M7 12V7.500H9V12M10.500 12V6.500H12.500V12M2 6L6 3L8 5L12 1" />],
  ['십자선', <Pencil d="M4.500 1V8M1 4.500H8" />],
  ['수평선', <Pencil d="M1 4.500H8" />],
  ['수직선', <Pencil d="M3.500 1V7" />],
  ['추세선', <Icon d="M1 13L13 1" />],
  ['자동 추세선', <Icon s={18} d="M6 5.500L11 1"><IconText x="0" y="12" fontSize="5">AUTO</IconText></Icon>],
  ['문자', <Icon d="M1 5V3.500H8V5M4.500 3.500V13M3 13H6M11 0V6M8.500 3H14" />],
  ['모두 지우기', <Icon s={16} d="M5 10L8 6.500H13L10.500 10.500ZM5 10V13H10.500L13 9V6.500M10.500 10.500V13"><IconText x="0" y="5" fontSize="6">All</IconText></Icon>],
  ['봉', <Icon d="M4 2V12M10 1V11" fill="M2 4H6V10H2ZM8 3H12V9H8Z" />],
  ['정보', <Icon d="M1.500 7a3.500 3.500 0 1 0 7 0a3.500 3.500 0 1 0 -7 0M7.500 9.500L10 12.500M12.500 3V7M12.500 0.500V1.500" />],
  ['데이터', <Icon d="M1 7a3.500 3.500 0 1 0 7 0a3.500 3.500 0 1 0 -7 0M7 9.500L10 12.500M9 1.500H14M9 3.500H14M9 5.500H14" />],
  ['차트 검색', <Icon d="M1 5L5 1L9 4L13 1M1 7.500H5M1 9.500H5M1 11.500H5M6 8a2.500 2.500 0 1 0 5 0a2.500 2.500 0 1 0 -5 0M10.500 10L13 12.500" />],
  ['패턴', <Icon d="M1.500 13V8L5 11.500L8.500 8L12.500 12V8M5.500 8V1M3.500 3L5.500 1L7.500 3M9.500 0V6M7.500 4L9.500 6.500L12 4" />],
  ['피보나치', <Icon d="M1 2.500H13M1 7.500H13M1 12.500H13M13 2.500L2 12" />],
  ['구간선', <Icon d="M1.500 1V13M3.500 1V13M7.500 1V13M12.500 1V13" />],
  ['등간격선', <Icon d="M1.500 1V13M5.500 1V13M9.500 1V13M12.500 1V13" />],
  ['이전', <Icon d="M3.500 8V6A4 4 0 1 1 8 10.500M1 6.500L3.500 9L6 6.500" />],
  ['다음', <Icon d="M6 10.500A4 4 0 1 1 10.500 7" fill="M8 7H13L10.500 10.500Z" />],
  ['돋보기', <Icon d={MAG} />],
];
const PERIODS = ['일', '주', '월', '분', '틱', '년'];
const MINUTES = ['1', '3', '5', '10', '30', '60'];

export default function App() {
  return (
    <>
      <Global />
      <Window>
        <TitleBar>
          <Badge $bg="#c06a10">1</Badge>
          <Badge $bg="#888">?</Badge>
          <Title><Mixed t="[9590] 종합차트" /></Title>
          <TitleButton aria-label="도킹"><Icon d="M1 1L4 4M1 4V1H4M3.500 7V12.500H13V3.500H7M3.500 6.500H13M10 1.500V5" /></TitleButton>
          <TitleButton aria-label="선택"><Icon d="M1.500 4.500H10.500V12.500H1.500ZM3.500 4V1.500H13V10.500H11M4 8L6 10.500L9 6" w={1.3} /></TitleButton>
          <TitleButton aria-label="캡처"><Icon d="M1.500 4.500H4V2.500H9V4.500H12.500V12.500H1.500ZM5 8.500a2 2 0 1 0 4 0a2 2 0 1 0 -4 0" /></TitleButton>
          <TitleButton aria-label="설정"><Sun /></TitleButton>
          <TitleButton aria-label="최소화"><Icon w={2} d="M2 11H12" /></TitleButton>
          <TitleButton aria-label="최대화"><Icon w={2} d="M2 3H12V11H2Z" /></TitleButton>
          <TitleButton aria-label="닫기"><Icon w={2} d="M2 2L12 12M12 2L2 12" /></TitleButton>
        </TitleBar>

        <Toolbars>
          <ToolRow>
            <Joined>
              <ToolButton $w={20} aria-label="접기"><Icon d="M6.500 4L3.500 7L6.500 10M10.500 4L7.500 7L10.500 10" /></ToolButton>
              <ToolButton $w={21} aria-label="위로"><Icon d="M4 6.500L7 3.500L10 6.500M4 10.500L7 7.500L10 10.500" /></ToolButton>
            </Joined>
            <ToolButton $w={20}>전</ToolButton>
            <ToolButton $w={33} $corner>주식</ToolButton>
            <Joined>
              <Field $w={46} aria-label="종목코드" defaultValue="381970" />
              <ToolButton $w={18} aria-label="목록"><Down /></ToolButton>
              <ToolButton $w={20} aria-label="찾기"><Icon d="M4.500 5.500a3.500 3.500 0 1 0 7 0a3.500 3.500 0 1 0 -7 0M5.500 8.500L2 12" /></ToolButton>
            </Joined>
            <ToolButton $w={20}>관</ToolButton>
            <Joined>
              <ToolButton $w={20} aria-label="알림"><Icon d="M7 1L4 5.500H10ZM2.500 8.500H11.500L10 6M2.500 8.500L4 6M5 10.500a2 2 0 1 0 4 0a2 2 0 1 0 -4 0" /></ToolButton>
              <Spin w={20} />
            </Joined>
            <Dots><b>⋮</b></Dots>
            <NameBox $w={113}><MarketTag>신</MarketTag>케이카</NameBox>
            <ToolButton $w={20}><b>i</b></ToolButton>
            <Joined>
              {PERIODS.map((p, i) => <ToolButton key={p} $w={i ? 19 : 20} $on={!i}>{p}</ToolButton>)}
            </Joined>
            <Joined>
              {MINUTES.map(m => <NumberButton key={m} $w={19}>{m}</NumberButton>)}
            </Joined>
            <SelectWrap>
              <UnitSelect $w={47} aria-label="주기" defaultValue="1"><option>1</option></UnitSelect>
              <svg width="17" height="18" viewBox="0 0 17 18" fill="none" stroke="#444" strokeWidth="1.600"><path d="M5 7.500L8.500 11L12 7.500" /></svg>
            </SelectWrap>
            <Joined>
              <Field $w={68} aria-label="기준일" defaultValue="2023/06/11" />
              <ToolButton $w={19} aria-label="달력"><Icon s={13} d="M1.500 1.500H12.500V12.500H1.500ZM1.500 4.500H12.500M4 7H5M6.500 7H7.500M9 7H10M4 10H5M6.500 10H7.500M9 10H10" /></ToolButton>
            </Joined>
            <ToolButton $w={20} disabled>당</ToolButton>
            <Joined>
              <Field $w={44} $right aria-label="표시 개수" defaultValue="170" />
              <Spin w={16} />
            </Joined>
            <Dots>/</Dots>
            <Field $w={45} $right aria-label="전체 개수" defaultValue="3000" />
            <ToolButton $w={19} disabled aria-label="확대"><Icon d="M2 6a3 3 0 1 0 6 0a3 3 0 1 0 -6 0M7 8.500L10.500 12M11 1V6M8.500 3.500H13.500" /></ToolButton>
            <ToolButton $w={19} $corner aria-label="환경설정"><Gear s={13} /></ToolButton>
            <Push><ToolButton $w={8} aria-label="더보기"><Icon s={8} w={1.6} d="M2 3L6 7L2 11M8 3L12 7L8 11" /></ToolButton></Push>
          </ToolRow>
          <ToolRow>
            <Joined>
              <ToolButton $w={72} $corner>차트틀</ToolButton>
              <ToolButton $w={20} $corner aria-label="저장"><Icon d="M1.500 1.500H12.500V12.500H1.500ZM4.500 2V5.500H9.500V2M3.500 12V8.500H10.500V12M5 10.500H9" /></ToolButton>
            </Joined>
            <ToolButton $w={58} $corner>관심지표</ToolButton>
            <Joined>
              <ToolButton $w={20} aria-label="이전"><Icon fill="M9 3V11L5 7Z" /></ToolButton>
              <ToolButton $w={19} disabled aria-label="정지"><Icon fill="M4 4H10V10H4Z" /></ToolButton>
              <ToolButton $w={19} aria-label="다음"><Icon fill="M5 3V11L9 7Z" /></ToolButton>
              <ToolButton $w={20} $corner>수</ToolButton>
            </Joined>
            <ToolButton $w={46}>초기화</ToolButton>
            <ToolButton $w={19} aria-label="격자"><Icon d="M1.500 1.500H12.500V12.500H1.500ZM1.500 5.500H12.500M1.500 9.500H12.500M5.500 1.500V12.500M9.500 1.500V12.500" /></ToolButton>
            <ToolButton $w={19} aria-label="분할"><Icon d="M1.500 1.500H12.500V12.500H1.500ZM1.500 4.500H12.500M6.500 4.500V12.500M6.500 8.500H12.500" /></ToolButton>
            <ToolButton $w={20} aria-label="겹치기"><Icon d="M1 5L2.500 4V10M5 7H9M7 5V9M10.500 5L12 4V10" /></ToolButton>
            <ToolButton $w={20} $corner><b>₩</b></ToolButton>
            <ToolButton $w={20} aria-label="도구"><Icon w={1.8} d="M4.500 4L9.500 12.500M9.500 4L4.500 12.500M4 1V4H5.500M10 1V4H8.500" /></ToolButton>
            <ToolButton $w={45}><Cycle />지표</ToolButton>
            <ToolButton $w={45} disabled><Cycle />종목</ToolButton>
            <ToolButton $w={45} disabled><Cycle />주기</ToolButton>
            <ToolButton $w={45}><Cycle />보기</ToolButton>
            <ToolButton $w={57}>보조기능</ToolButton>
            <ToolButton $w={57}>수식관리</ToolButton>
          </ToolRow>
        </Toolbars>

        <Body>
          <Side>
            <Tabs>
              <Tab>종목</Tab>
              <Tab $on>지표</Tab>
              <Tab>전략</Tab>
            </Tabs>
            <Search>
              <Joined>
                <Field $w={122} aria-label="스마트 검색" placeholder="스마트 검색" />
                <ToolButton $w={19} aria-label="검색"><Icon d={MAG} /></ToolButton>
              </Joined>
              <SearchMore>
                <ToolButton $w={19} aria-label="펼치기"><Icon d="M4 4.500L7 7L10 4.500M4 8.500L7 11L10 8.500" /></ToolButton>
              </SearchMore>
            </Search>
            <GroupHead>
              <Icon s={12} fill="M1 1H6L7 3H13V13H1ZM4 7V9H10V7Z" />유형
            </GroupHead>
            <Tree>
              <TreeTitle><Icon s={6} w={2} d="M1 1V12H13" /><Mixed t="차트유형" /></TreeTitle>
              {TYPES.map((t, i) => (
                <TreeItem key={t}>
                  <Radio type="radio" name="type" defaultChecked={!i} />
                  <TreeLabel $on={!i}><Mixed t={t} /></TreeLabel>
                </TreeItem>
              ))}
            </Tree>
            {GROUPS.map(g => (
              <GroupHead key={g}>
                <Icon s={12} w={1.2} d="M1.500 2.500H6L7 3.500H12.500V12.500H1.500ZM7 5V11M4 8H10" />{g}
              </GroupHead>
            ))}
            <SideFoot>
              <span>관심지표</span>
              <ToolButton $w={38} disabled>등록</ToolButton>
              <ToolButton $w={38} disabled>삭제</ToolButton>
            </SideFoot>
          </Side>

          <Main>
            <Quote>
              <PriceBox>
                <Strong>14,240</Strong>
                <Strong><Rise>▲</Rise>910</Strong>
                <Strong>+6.83%</Strong>
                <span>896,079</span>
              </PriceBox>
              <QuoteName $w={22}>시</QuoteName>
              <QuoteValue $w={71}>13,580</QuoteValue>
              <QuoteName $w={22}>고</QuoteName>
              <QuoteValue $w={71}>14,290</QuoteValue>
              <QuoteName $w={22}>저</QuoteName>
              <QuoteValue $w={71}>13,580</QuoteValue>
              <QuoteName $w={58}>체결강도</QuoteName>
              <QuoteValue $w={62}>134.90</QuoteValue>
              <QuoteTools>
                <span>[<Mixed t="일" />]</span>
                <ToolButton $w={19} aria-label="설정"><Gear s={13} /></ToolButton>
                <OrderButton $c="#c03040" $bg="#fff4f4">매수</OrderButton>
                <OrderButton $c="#2848c0" $bg="#eef4ff">매도</OrderButton>
                <MiniStack>
                  <MiniButton aria-label="최대화"><Icon s={7} w={2} d="M3 3H11V11H3Z" /></MiniButton>
                  <MiniButton aria-label="닫기"><Icon s={7} w={2} d="M2 2L12 12M12 2L2 12" /></MiniButton>
                </MiniStack>
              </QuoteTools>
            </Quote>
            <Pane><PricePlot /><PriceAxis /></Pane>
            <Pane><VolumePlot /><VolumeAxis /></Pane>
            <Pane><MacdPlot /><MacdAxis /></Pane>
            <DateRow>
              <Drawing $open viewBox="184 808 1123 16">
                {MONTHS.map(([x, t, bold]) => (
                  <g key={x}>
                    <rect x={x} y="808" width="1" height="5" fill="#aaa" />
                    <DateText x={x + 2} y="820" $bold={bold}>{t}</DateText>
                  </g>
                ))}
              </Drawing>
              <LastDate>06/14</LastDate>
            </DateRow>
            <ScrollRow>
              <ScrollTrack>
                <ScrollButton aria-label="왼쪽"><Icon s={8} fill="M10 2V12L4 7Z" /></ScrollButton>
                <ScrollThumb />
                <ScrollButton aria-label="오른쪽"><Icon s={8} fill="M4 2V12L10 7Z" /></ScrollButton>
              </ScrollTrack>
              <PlayTools>
                <PlainButton aria-label="처음"><Icon s={12} w={1.5} d="M3 2V12" fill="M11 2V12L5 7Z" /></PlainButton>
                <PlainButton aria-label="일시정지"><Icon s={12} w={2.5} d="M4.500 2V12M9.500 2V12" /></PlainButton>
                <PlainButton aria-label="끝"><Icon s={12} w={1.5} d="M11 2V12" fill="M3 2V12L9 7Z" /></PlainButton>
                <SpeedLabel><Speed type="range" min="0" max="100" defaultValue="5" aria-label="재생 속도" /></SpeedLabel>
                <PlainButton aria-label="축소"><Icon s={13} d="M4 7H10"><circle cx="7" cy="7" r="5.500" /></Icon></PlainButton>
                <PlainButton aria-label="확대"><Icon s={13} d="M4 7H10M7 4V10"><circle cx="7" cy="7" r="5.500" /></Icon></PlainButton>
                <PlainButton aria-label="글꼴"><Icon s={12} d="M3 12L7 2L11 12M4.500 9H9.500" /></PlainButton>
                <PlainButton aria-label="설정"><Gear s={13} /></PlainButton>
                <PlainButton aria-label="도구"><Icon s={13} d="M1.500 5V2.500H12V5H9V3M5.500 5.500H8.500V13H5.500Z" /></PlainButton>
                <PlainButton aria-label="편집"><Icon s={13} d="M4.500 6V1.500H13V10H9M6 4H11M6 6.500H11M1 8L6 13M6 8L1 13M4 7L9 10" /></PlainButton>
                <PlainButton $on aria-label="표"><Icon s={12} w={1.4} d="M1.500 2.500H12.500V12.500H1.500ZM1.500 4.500H12.500M4 7H6M8 7H11M4 10H6M8 10H11" /></PlainButton>
                <PlainButton $on aria-label="차트"><Icon s={12} d="M1.500 1.500H13V12.500H1.500ZM2 8L5 5L7 7L12 3M3 11H12" /></PlainButton>
                <PlainButton $on aria-label="십자선"><Icon s={12} d="M7 1V13M1 7H13" /></PlainButton>
                <PlainButton aria-label="창"><Icon s={12} w={1.4} d="M1.500 6.500H9.500V12.500H1.500ZM4.500 6V1.500H13V9.500H10M4.500 3H13M1.500 8H9.500" /></PlainButton>
                <PlainButton aria-label="전체화면"><Icon s={12} w={1.4} d="M1 4V1H4M10 1H13V4M13 10V13H10M4 13H1V10M4 4.500H10V9.500H4Z" /></PlainButton>
              </PlayTools>
            </ScrollRow>
          </Main>

          <Strip>
            {STRIP.map(([name, icon], i) => (
              <StripButton key={name} aria-label={name} $on={name === '정보'} $line={i === 1}>{icon}</StripButton>
            ))}
          </Strip>
        </Body>
      </Window>
    </>
  );
}
